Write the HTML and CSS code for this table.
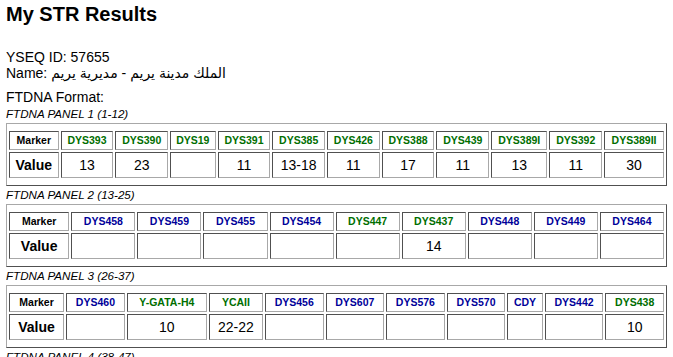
FILE: index.html
```html
<!DOCTYPE html>
<html>
<head>
<meta charset="utf-8">
<title>My STR Results</title>
<link rel="stylesheet" href="styles.css">
</head>
<body>
<h1 class="title">My STR Results</h1>
<p class="info">YSEQ ID: 57655<br>Name: الملك مدينة يريم - مديرية يريم</p>
<p class="format">FTDNA Format:</p>

<div class="panel-label">FTDNA PANEL 1 (1-12)</div>
<div class="panel">
  <table class="str">
    <tr class="hdr">
      <td class="mk">Marker</td>
      <td class="g">DYS393</td><td class="g">DYS390</td><td class="g">DYS19</td><td class="g">DYS391</td>
      <td class="g">DYS385</td><td class="g">DYS426</td><td class="g">DYS388</td><td class="g">DYS439</td>
      <td class="g">DYS389I</td><td class="g">DYS392</td><td class="g">DYS389II</td>
    </tr>
    <tr class="val">
      <td class="vl">Value</td>
      <td>13</td><td>23</td><td></td><td>11</td><td>13-18</td><td>11</td><td>17</td><td>11</td><td>13</td><td>11</td><td>30</td>
    </tr>
  </table>
</div>

<div class="panel-label">FTDNA PANEL 2 (13-25)</div>
<div class="panel">
  <table class="str">
    <tr class="hdr">
      <td class="mk">Marker</td>
      <td class="b">DYS458</td><td class="b">DYS459</td><td class="b">DYS455</td><td class="b">DYS454</td>
      <td class="g">DYS447</td><td class="g">DYS437</td><td class="b">DYS448</td><td class="b">DYS449</td><td class="b">DYS464</td>
    </tr>
    <tr class="val">
      <td class="vl">Value</td>
      <td></td><td></td><td></td><td></td><td></td><td>14</td><td></td><td></td><td></td>
    </tr>
  </table>
</div>

<div class="panel-label">FTDNA PANEL 3 (26-37)</div>
<div class="panel">
  <table class="str">
    <tr class="hdr">
      <td class="mk">Marker</td>
      <td class="b">DYS460</td><td class="g">Y-GATA-H4</td><td class="g">YCAII</td><td class="b">DYS456</td>
      <td class="b">DYS607</td><td class="b">DYS576</td><td class="b">DYS570</td><td class="b">CDY</td>
      <td class="b">DYS442</td><td class="g">DYS438</td>
    </tr>
    <tr class="val">
      <td class="vl">Value</td>
      <td></td><td>10</td><td>22-22</td><td></td><td></td><td></td><td></td><td></td><td></td><td>10</td>
    </tr>
  </table>
</div>

<div class="panel-label">FTDNA PANEL 4 (38-47)</div>
<div class="panel">
  <table class="str">
    <tr class="hdr">
      <td class="mk">Marker</td>
      <td class="b">DYS531</td><td class="b">DYS578</td><td class="b">DYF395S1</td><td class="b">DYS590</td>
      <td class="b">DYS537</td><td class="b">DYS641</td><td class="b">DYS472</td><td class="b">DYF406S1</td><td class="b">DYS511</td>
    </tr>
    <tr class="val">
      <td class="vl">Value</td>
      <td></td><td></td><td></td><td></td><td></td><td></td><td></td><td></td><td></td>
    </tr>
  </table>
</div>
</body>
</html>
```
FILE: styles.css
```css
html, body {
  background: #ffffff;
}
body {
  margin: 0 6px;
  font-family: "Liberation Sans", Arial, "DejaVu Sans", sans-serif;
  font-size: 14px;
  color: #000000;
}
.title {
  font-size: 20px;
  font-weight: bold;
  margin: 3px 0 23px 0;
  line-height: 23px;
}
.info {
  margin: 0;
  line-height: 16px;
}
.format {
  margin: 8px 0 0 0;
  line-height: 16px;
}
.panel-label {
  font-style: italic;
  font-size: 11.6px;
  line-height: 18px;
}
.panel {
  border: 1px solid;
  border-color: #a8a8a8 #505050 #505050 #a8a8a8;
  padding: 5px 0;
}
.str {
  width: 100%;
  border-collapse: separate;
  border-spacing: 2px;
}
.str td {
  border: 1px solid;
  border-color: #505050 #a8a8a8 #a8a8a8 #505050;
  text-align: center;
  padding: 0 1px;
}
.hdr td {
  font-size: 10.5px;
  font-weight: bold;
  line-height: 13px;
  padding-top: 2px;
  padding-bottom: 2px;
}
.val td {
  font-size: 14px;
  line-height: 16px;
  padding-top: 4px;
  padding-bottom: 4px;
}
.val td.vl {
  font-weight: bold;
}
.mk {
  color: #000000;
}
.g {
  color: #006e00;
}
.b {
  color: #000099;
}
```
